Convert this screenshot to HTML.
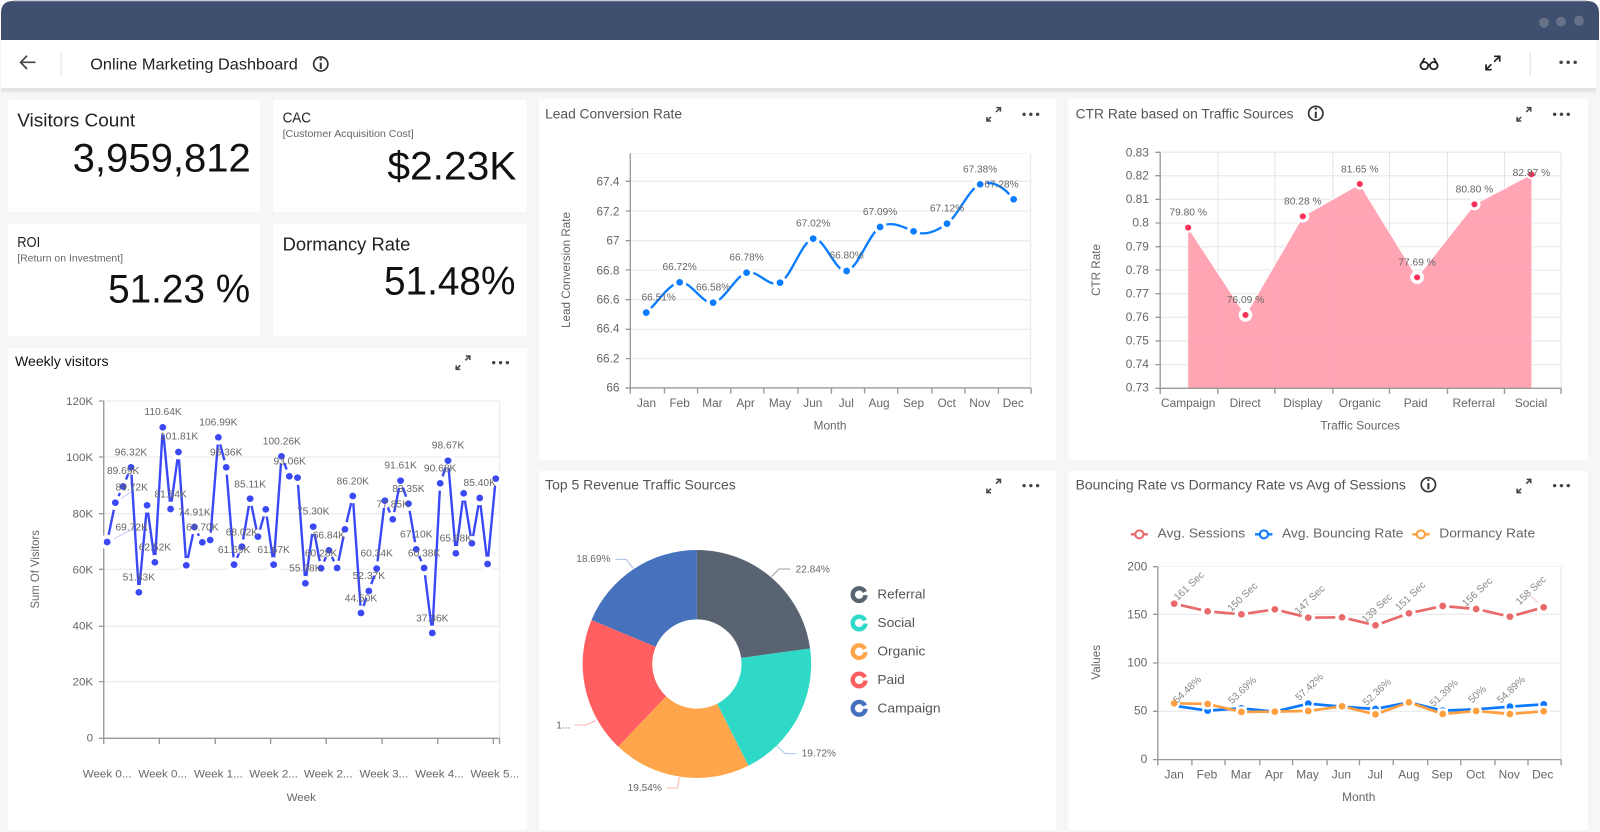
<!DOCTYPE html>
<html><head><meta charset="utf-8"><title>Online Marketing Dashboard</title>
<style>
html,body{margin:0;padding:0;width:1600px;height:832px;overflow:hidden;background:#fff}
svg{display:block;filter:blur(.35px)}
text{font-family:"Liberation Sans",sans-serif;fill:#666}
.l{font-size:30px}
.a{font-size:35px}
.t{font-size:41px;fill:#555}
.m{text-anchor:middle}
.e{text-anchor:end}
.big{font-size:120px;fill:#111;text-anchor:end}
.grid{stroke:#ececec;stroke-width:4;fill:none}
.ax{stroke:#999;stroke-width:4;fill:none}
</style></head><body>
<svg xmlns="http://www.w3.org/2000/svg" width="1600" height="832" viewBox="0 0 1600 832">
<defs>
<g id="ex" fill="none" stroke="#444" stroke-width="4.5"><path d="M14 31L3 42M2 31V43H14M29 16L41 4M30 3H42V15"/></g>
<g id="dots" fill="#444"><circle cx="0" cy="0" r="5"/><circle cx="20" cy="0" r="5"/><circle cx="40" cy="0" r="5"/></g>
<polygon id="wd" points="0,0 32,-15 35,3" fill="#fff"/>
</defs>
<rect width="1600" height="832" fill="#f6f6f6"/>
<path d="M0 0H1600V40H0Z" fill="#fff"/>
<path d="M1 40V13Q1 1 13 1H1587Q1599 1 1599 13V40Z" fill="#3f4f70"/>
<path d="M13 1H1587" stroke="#8b94a8" stroke-width="1"/>
<circle cx="1544" cy="22.7" r="5" fill="#667086"/><circle cx="1561" cy="21.7" r="5" fill="#667086"/><circle cx="1579" cy="20.7" r="5" fill="#667086"/>
<rect x="1" y="40" width="1595" height="48" fill="#fff"/>
<rect x="1" y="88" width="1595" height="3" fill="#e4e4e4"/>
<rect x="1" y="91" width="1595" height="2" fill="#eeeeee"/>

<!-- crop 1 frame -->
<g transform="scale(.338 .3333)">
<path d="M62 187H105M80 167L61 187L80 207" fill="none" stroke="#444" stroke-width="5"/>
<path d="M181 157V227" stroke="#ddd" stroke-width="3"/>
<text x="267" y="209" style="font-size:47px;fill:#222" textLength="614" lengthAdjust="spacingAndGlyphs">Online Marketing Dashboard</text>
<circle cx="949" cy="192" r="21" fill="none" stroke="#333" stroke-width="5"/><path d="M949 188V207" stroke="#333" stroke-width="6"/><circle cx="949" cy="178" r="3.5" fill="#333"/>
<rect x="24" y="300" width="746" height="335" fill="#fff"/>
<rect x="808" y="300" width="750" height="335" fill="#fff"/>
<rect x="24" y="672" width="746" height="335" fill="#fff"/>
<rect x="808" y="672" width="750" height="335" fill="#fff"/>
<text x="51" y="380" style="font-size:55px;fill:#222" textLength="349" lengthAdjust="spacingAndGlyphs">Visitors Count</text>
<text x="742" y="515" class="big" textLength="527" lengthAdjust="spacingAndGlyphs">3,959,812</text>
<text x="836" y="368" style="font-size:44px;fill:#222" textLength="84" lengthAdjust="spacingAndGlyphs">CAC</text>
<text x="836" y="411" style="font-size:30px;fill:#666" textLength="388" lengthAdjust="spacingAndGlyphs">[Customer Acquisition Cost]</text>
<text x="1528" y="539" class="big" textLength="382" lengthAdjust="spacingAndGlyphs">$2.23K</text>
<text x="51" y="741" style="font-size:44px;fill:#222" textLength="68" lengthAdjust="spacingAndGlyphs">ROI</text>
<text x="51" y="784" style="font-size:30px;fill:#666" textLength="313" lengthAdjust="spacingAndGlyphs">[Return on Investment]</text>
<text x="740" y="908" class="big" textLength="420" lengthAdjust="spacingAndGlyphs">51.23 %</text>
<text x="836" y="751" style="font-size:55px;fill:#222" textLength="378" lengthAdjust="spacingAndGlyphs">Dormancy Rate</text>
<text x="1525" y="883" class="big" textLength="389" lengthAdjust="spacingAndGlyphs">51.48%</text>
</g>

<!-- toolbar right -->
<g transform="translate(1050 0) scale(.3508 .3333)">
<circle cx="1067" cy="197" r="11" fill="none" stroke="#222" stroke-width="5"/><circle cx="1094" cy="197" r="11" fill="none" stroke="#222" stroke-width="5"/><path d="M1056 195L1068 174M1105 195L1094 174M1078 194H1083" fill="none" stroke="#222" stroke-width="5"/>
<path d="M1258 193L1244 208M1243 193V209H1259M1266 185L1281 170M1266 169H1282V185" fill="none" stroke="#222" stroke-width="5"/>
<path d="M1369 157V227" stroke="#ddd" stroke-width="3"/>
<use href="#dots" transform="translate(1457 187)"/>
</g>

<!-- Weekly -->
<g transform="translate(0 345) scale(.3412 .3333)">
<rect x="22" y="10" width="1523" height="1445" fill="#fff"/>
<text x="44" y="63" style="font-size:42px;fill:#111" textLength="274" lengthAdjust="spacingAndGlyphs">Weekly visitors</text>
<use href="#ex" x="1335" y="30"/><use href="#dots" transform="translate(1447 53)"/>
<path class="grid" d="M304 168H1464M304 336H1464M304 506H1464M304 673H1464M304 844H1464M304 1010H1464M1464 168V1180" />
<path class="ax" d="M304 168V1180H1464M290 168H304M290 336H304M290 506H304M290 673H304M290 844H304M290 1010H304M290 1180H304M304 1180V1197M467 1180V1197M631 1180V1197M793 1180V1197M956 1180V1197M1120 1180V1197M1283 1180V1197M1446 1180V1197M1464 1180V1197"/>
<g class="a" style="font-size:34px" text-anchor="end">
<text x="273" y="180" class="e" style="font-size:34px">120K</text><text x="273" y="348" class="e" style="font-size:34px">100K</text><text x="273" y="517" class="e" style="font-size:34px">80K</text><text x="273" y="685" class="e" style="font-size:34px">60K</text><text x="273" y="854" class="e" style="font-size:34px">40K</text><text x="273" y="1021" class="e" style="font-size:34px">20K</text><text x="273" y="1190" class="e" style="font-size:34px">0</text>
</g>
<g>
<text x="314" y="1298" class="m" style="font-size:34px">Week 0...</text><text x="477" y="1298" class="m" style="font-size:34px">Week 0...</text><text x="640" y="1298" class="m" style="font-size:34px">Week 1...</text><text x="802" y="1298" class="m" style="font-size:34px">Week 2...</text><text x="962" y="1298" class="m" style="font-size:34px">Week 2...</text><text x="1125" y="1298" class="m" style="font-size:34px">Week 3...</text><text x="1288" y="1298" class="m" style="font-size:34px">Week 4...</text><text x="1450" y="1298" class="m" style="font-size:34px">Week 5...</text>
<text x="883" y="1368" class="m" style="font-size:34px">Week</text>
<text transform="translate(114 673) rotate(-90)" class="m" style="font-size:34px">Sum Of Visitors</text>
</g>
<path d="M314 591L385 555M338 473L385 440" stroke="#a9b0fb" stroke-width="2" fill="none"/>
<polyline fill="none" stroke="#3a48f5" stroke-width="7" stroke-linejoin="round" points="314,591 338,473 361,424 384,367 407,742 431,481 454,652 477,247 500,492 523,321 546,661 570,546 593,592 616,585 640,277 663,367 686,659 709,605 733,461 756,575 779,493 802,659 825,334 848,394 872,398 895,715 918,545 941,670 964,616 988,669 1011,553 1034,453 1058,804 1081,738 1104,671 1128,467 1151,523 1174,407 1197,476 1220,613 1243,669 1267,864 1290,415 1313,347 1336,625 1359,445 1383,595 1406,459 1429,657 1453,401"/>
<g fill="#fff">
<circle cx="314" cy="591" r="22"/><circle cx="338" cy="473" r="22"/><circle cx="361" cy="424" r="22"/><circle cx="384" cy="367" r="22"/><circle cx="407" cy="742" r="22"/><circle cx="431" cy="481" r="22"/><circle cx="454" cy="652" r="22"/><circle cx="477" cy="247" r="22"/><circle cx="500" cy="492" r="22"/><circle cx="523" cy="321" r="22"/><circle cx="546" cy="661" r="22"/><circle cx="570" cy="546" r="22"/><circle cx="593" cy="592" r="22"/><circle cx="616" cy="585" r="22"/><circle cx="640" cy="277" r="22"/><circle cx="663" cy="367" r="22"/><circle cx="686" cy="659" r="22"/><circle cx="709" cy="605" r="22"/><circle cx="733" cy="461" r="22"/><circle cx="756" cy="575" r="22"/><circle cx="779" cy="493" r="22"/><circle cx="802" cy="659" r="22"/><circle cx="825" cy="334" r="22"/><circle cx="848" cy="394" r="22"/><circle cx="872" cy="398" r="22"/><circle cx="895" cy="715" r="22"/><circle cx="918" cy="545" r="22"/><circle cx="941" cy="670" r="22"/><circle cx="964" cy="616" r="22"/><circle cx="988" cy="669" r="22"/><circle cx="1011" cy="553" r="22"/><circle cx="1034" cy="453" r="22"/><circle cx="1058" cy="804" r="22"/><circle cx="1081" cy="738" r="22"/><circle cx="1104" cy="671" r="22"/><circle cx="1128" cy="467" r="22"/><circle cx="1151" cy="523" r="22"/><circle cx="1174" cy="407" r="22"/><circle cx="1197" cy="476" r="22"/><circle cx="1220" cy="613" r="22"/><circle cx="1243" cy="669" r="22"/><circle cx="1267" cy="864" r="22"/><circle cx="1290" cy="415" r="22"/><circle cx="1313" cy="347" r="22"/><circle cx="1336" cy="625" r="22"/><circle cx="1359" cy="445" r="22"/><circle cx="1383" cy="595" r="22"/><circle cx="1406" cy="459" r="22"/><circle cx="1429" cy="657" r="22"/><circle cx="1453" cy="401" r="22"/>
</g>
<g fill="#3a48f5">
<circle cx="314" cy="591" r="10"/><circle cx="338" cy="473" r="10"/><circle cx="361" cy="424" r="10"/><circle cx="384" cy="367" r="10"/><circle cx="407" cy="742" r="10"/><circle cx="431" cy="481" r="10"/><circle cx="454" cy="652" r="10"/><circle cx="477" cy="247" r="10"/><circle cx="500" cy="492" r="10"/><circle cx="523" cy="321" r="10"/><circle cx="546" cy="661" r="10"/><circle cx="570" cy="546" r="10"/><circle cx="593" cy="592" r="10"/><circle cx="616" cy="585" r="10"/><circle cx="640" cy="277" r="10"/><circle cx="663" cy="367" r="10"/><circle cx="686" cy="659" r="10"/><circle cx="709" cy="605" r="10"/><circle cx="733" cy="461" r="10"/><circle cx="756" cy="575" r="10"/><circle cx="779" cy="493" r="10"/><circle cx="802" cy="659" r="10"/><circle cx="825" cy="334" r="10"/><circle cx="848" cy="394" r="10"/><circle cx="872" cy="398" r="10"/><circle cx="895" cy="715" r="10"/><circle cx="918" cy="545" r="10"/><circle cx="941" cy="670" r="10"/><circle cx="964" cy="616" r="10"/><circle cx="988" cy="669" r="10"/><circle cx="1011" cy="553" r="10"/><circle cx="1034" cy="453" r="10"/><circle cx="1058" cy="804" r="10"/><circle cx="1081" cy="738" r="10"/><circle cx="1104" cy="671" r="10"/><circle cx="1128" cy="467" r="10"/><circle cx="1151" cy="523" r="10"/><circle cx="1174" cy="407" r="10"/><circle cx="1197" cy="476" r="10"/><circle cx="1220" cy="613" r="10"/><circle cx="1243" cy="669" r="10"/><circle cx="1267" cy="864" r="10"/><circle cx="1290" cy="415" r="10"/><circle cx="1313" cy="347" r="10"/><circle cx="1336" cy="625" r="10"/><circle cx="1359" cy="445" r="10"/><circle cx="1383" cy="595" r="10"/><circle cx="1406" cy="459" r="10"/><circle cx="1429" cy="657" r="10"/><circle cx="1453" cy="401" r="10"/>
</g>
<g class="m">
<text class="l m" x="478" y="210">110.64K</text><text class="l m" x="525" y="284">101.81K</text><text class="l m" x="640" y="242">106.99K</text><text class="l m" x="663" y="331">96.36K</text><text class="l m" x="384" y="331">96.32K</text><text class="l m" x="361" y="387">89.69K</text><text class="l m" x="386" y="437">89.72K</text><text class="l m" x="386" y="556">69.72K</text><text class="l m" x="454" y="616">62.52K</text><text class="l m" x="407" y="707">51.83K</text><text class="l m" x="500" y="457">81.54K</text><text class="l m" x="570" y="511">74.91K</text><text class="l m" x="593" y="556">69.70K</text><text class="l m" x="709" y="571">68.02K</text><text class="l m" x="686" y="624">61.69K</text><text class="l m" x="733" y="427">85.11K</text><text class="l m" x="802" y="624">61.67K</text><text class="l m" x="826" y="299">100.26K</text><text class="l m" x="849" y="359">93.06K</text><text class="l m" x="918" y="508">75.30K</text><text class="l m" x="964" y="581">66.84K</text><text class="l m" x="941" y="635">60.28K</text><text class="l m" x="895" y="679">55.08K</text><text class="l m" x="1034" y="418">86.20K</text><text class="l m" x="1104" y="635">60.34K</text><text class="l m" x="1081" y="702">52.37K</text><text class="l m" x="1058" y="770">44.50K</text><text class="l m" x="1174" y="371">91.61K</text><text class="l m" x="1197" y="441">83.35K</text><text class="l m" x="1151" y="487">77.85K</text><text class="l m" x="1220" y="577">67.10K</text><text class="l m" x="1243" y="635">60.38K</text><text class="l m" x="1267" y="830">37.36K</text><text class="l m" x="1313" y="311">98.67K</text><text class="l m" x="1290" y="379">90.68K</text><text class="l m" x="1336" y="590">65.68K</text><text class="l m" x="1406" y="423">85.40K</text>
</g>
</g>

<!-- Lead conversion -->
<g transform="translate(535 95) scale(.338 .3333)">
<rect x="12" y="13" width="1530" height="1082" fill="#fff"/>
<text x="30" y="70" class="t" textLength="405" lengthAdjust="spacingAndGlyphs">Lead Conversion Rate</text>
<use href="#ex" x="1335" y="35"/><use href="#dots" transform="translate(1447 58)"/>
<path class="grid" d="M282 259H1466M282 348H1466M282 437H1466M282 525H1466M282 614H1466M282 703H1466M282 791H1466M1466 175V879"/>
<path d="M282 175H1466" stroke="#f2f2f2" stroke-width="3"/>
<path class="ax" d="M282 175V879H1468M268 259H282M268 348H282M268 437H282M268 525H282M268 614H282M268 703H282M268 791H282M268 879H282M282 879V896M383 879V896M481 879V896M579 879V896M677 879V896M778 879V896M877 879V896M975 879V896M1073 879V896M1174 879V896M1272 879V896M1371 879V896M1468 879V896"/>
<text x="250" y="272" class="a e">67.4</text><text x="250" y="361" class="a e">67.2</text><text x="250" y="449" class="a e">67</text><text x="250" y="538" class="a e">66.8</text><text x="250" y="625" class="a e">66.6</text><text x="250" y="713" class="a e">66.4</text><text x="250" y="802" class="a e">66.2</text><text x="250" y="890" class="a e">66</text>
<text x="330" y="936" class="a m">Jan</text><text x="428" y="936" class="a m">Feb</text><text x="525" y="936" class="a m">Mar</text><text x="623" y="936" class="a m">Apr</text><text x="725" y="936" class="a m">May</text><text x="822" y="936" class="a m">Jun</text><text x="921" y="936" class="a m">Jul</text><text x="1018" y="936" class="a m">Aug</text><text x="1120" y="936" class="a m">Sep</text><text x="1218" y="936" class="a m">Oct</text><text x="1316" y="936" class="a m">Nov</text><text x="1415" y="936" class="a m">Dec</text>
<text x="873" y="1004" class="a m">Month</text>
<text transform="translate(104 525) rotate(-90)" class="a m">Lead Conversion Rate</text>
<path fill="none" stroke="#0a7cff" stroke-width="7" d="M329 653C362 625 395 567 428 562C461 557 494 628 527 623C560 618 593 543 626 533C659 523 692 580 725 563C758 546 790 437 823 431C856 425 889 534 922 528C955 522 988 416 1021 396C1054 376 1087 395 1120 409C1153 424 1186 410 1219 386C1252 362 1284 280 1317 268C1350 256 1383 270 1416 313"/>
<g fill="#fff"><circle cx="329" cy="653" r="20"/><circle cx="428" cy="562" r="20"/><circle cx="527" cy="623" r="20"/><circle cx="626" cy="533" r="20"/><circle cx="725" cy="563" r="20"/><circle cx="823" cy="431" r="20"/><circle cx="922" cy="528" r="20"/><circle cx="1021" cy="396" r="20"/><circle cx="1120" cy="409" r="20"/><circle cx="1219" cy="386" r="20"/><circle cx="1317" cy="268" r="20"/><circle cx="1416" cy="313" r="20"/></g>
<g fill="#0a7cff"><circle cx="329" cy="653" r="10"/><circle cx="428" cy="562" r="10"/><circle cx="527" cy="623" r="10"/><circle cx="626" cy="533" r="10"/><circle cx="725" cy="563" r="10"/><circle cx="823" cy="431" r="10"/><circle cx="922" cy="528" r="10"/><circle cx="1021" cy="396" r="10"/><circle cx="1120" cy="409" r="10"/><circle cx="1219" cy="386" r="10"/><circle cx="1317" cy="268" r="10"/><circle cx="1416" cy="313" r="10"/></g>
<text class="l m" x="366" y="617">66.51%</text><text class="l m" x="428" y="525">66.72%</text><text class="l m" x="527" y="587">66.58%</text><text class="l m" x="626" y="497">66.78%</text><text class="l m" x="823" y="394">67.02%</text><text class="l m" x="922" y="491">66.80%</text><text class="l m" x="1021" y="360">67.09%</text><text class="l m" x="1219" y="350">67.12%</text><text class="l m" x="1317" y="232">67.38%</text><text class="l m" x="1380" y="277">67.28%</text>
</g>

<!-- CTR -->
<g transform="translate(1065 95) scale(.3412 .3333)">
<rect x="10" y="13" width="1522" height="1082" fill="#fff"/>
<text x="31" y="70" class="t" textLength="639" lengthAdjust="spacingAndGlyphs">CTR Rate based on Traffic Sources</text>
<circle cx="735" cy="55" r="21" fill="none" stroke="#333" stroke-width="5"/><path d="M735 50V69" stroke="#333" stroke-width="6"/><circle cx="735" cy="41" r="3.5" fill="#333"/>
<use href="#ex" x="1323" y="35"/><use href="#dots" transform="translate(1435 58)"/>
<path class="grid" d="M279 172H1454M279 242H1454M279 313H1454M279 384H1454M279 455H1454M279 525H1454M279 596H1454M279 667H1454M279 738H1454M279 809H1454"/>
<path stroke="#e4e4e4" stroke-width="3" fill="none" d="M448 172V880M615 172V880M785 172V880M951 172V880M1121 172V880M1288 172V880M1454 172V880"/>
<path d="M361 880V398L529 660L697 364L864 267L1032 547L1200 328L1367 238V880Z" fill="#ffa0b0" fill-opacity=".95"/>
<path d="M361 398L529 660L697 364L864 267L1032 547L1200 328L1367 238" fill="none" stroke="#fff" stroke-width="3"/>
<path class="ax" d="M279 172V880H1454M265 172H279M265 242H279M265 313H279M265 384H279M265 455H279M265 525H279M265 596H279M265 667H279M265 738H279M265 809H279M265 880H279M279 880V897M448 880V897M615 880V897M785 880V897M951 880V897M1121 880V897M1288 880V897M1454 880V897"/>
<g fill="#fff"><circle cx="361" cy="398" r="15"/><circle cx="529" cy="660" r="20"/><circle cx="697" cy="364" r="19"/><circle cx="864" cy="267" r="17"/><circle cx="1032" cy="547" r="20"/><circle cx="1200" cy="328" r="18"/><circle cx="1367" cy="238" r="15"/></g>
<g fill="#f8325a"><circle cx="361" cy="398" r="9"/><circle cx="529" cy="660" r="9"/><circle cx="697" cy="364" r="9"/><circle cx="864" cy="267" r="9"/><circle cx="1032" cy="547" r="9"/><circle cx="1200" cy="328" r="9"/><circle cx="1367" cy="238" r="9"/></g>
<text x="246" y="184" class="a e">0.83</text><text x="246" y="253" class="a e">0.82</text><text x="246" y="324" class="a e">0.81</text><text x="246" y="395" class="a e">0.8</text><text x="246" y="466" class="a e">0.79</text><text x="246" y="537" class="a e">0.78</text><text x="246" y="607" class="a e">0.77</text><text x="246" y="678" class="a e">0.76</text><text x="246" y="749" class="a e">0.75</text><text x="246" y="819" class="a e">0.74</text><text x="246" y="890" class="a e">0.73</text>
<text x="361" y="936" class="a m">Campaign</text><text x="528" y="936" class="a m">Direct</text><text x="697" y="936" class="a m">Display</text><text x="864" y="936" class="a m">Organic</text><text x="1028" y="936" class="a m">Paid</text><text x="1198" y="936" class="a m">Referral</text><text x="1366" y="936" class="a m">Social</text>
<text x="865" y="1004" class="a m">Traffic Sources</text>
<text transform="translate(103 525) rotate(-90)" class="a m">CTR Rate</text>
<text class="l m" x="361" y="362">79.80 %</text><text class="l m" x="529" y="624">76.09 %</text><text class="l m" x="697" y="329">80.28 %</text><text class="l m" x="864" y="232">81.65 %</text><text class="l m" x="1032" y="511">77.69 %</text><text class="l m" x="1200" y="293">80.80 %</text><text class="l m" x="1367" y="243">82.87 %</text>
</g>

<!-- Pie -->
<g transform="translate(535 465) scale(.338 .3333)">
<rect x="12" y="18" width="1530" height="1077" fill="#fff"/>
<text x="30" y="74" class="t" textLength="564" lengthAdjust="spacingAndGlyphs">Top 5 Revenue Traffic Sources</text>
<use href="#ex" x="1335" y="40"/><use href="#dots" transform="translate(1447 62)"/>
<path d="M479 597V255A338 342 0 0 1 813.9 550.7Z" fill="#5a6372"/>
<path d="M479 597L813.9 550.7A338 342 0 0 1 631.4 902.3Z" fill="#2fd9c7"/>
<path d="M479 597L631.4 902.3A338 342 0 0 1 246.1 844.9Z" fill="#ffa64d"/>
<path d="M479 597L246.1 844.9A338 342 0 0 1 167.2 465Z" fill="#ff5f60"/>
<path d="M479 597L167.2 465A338 342 0 0 1 479 255Z" fill="#4672bd"/>
<ellipse cx="479" cy="597" rx="132" ry="134" fill="#fff"/>
<path d="M700 335L722 312H755" fill="none" stroke="#9aa0aa" stroke-width="3"/>
<path d="M715 842L740 866H773" fill="none" stroke="#a8c8f0" stroke-width="3"/>
<path d="M427 938L422 969H390" fill="none" stroke="#ffb8a8" stroke-width="3"/>
<path d="M180 767L150 780H117" fill="none" stroke="#ffb0b0" stroke-width="3"/>
<path d="M290 310L270 283H238" fill="none" stroke="#a9bde4" stroke-width="3"/>
<text class="l" x="771" y="322">22.84%</text><text class="l" x="789" y="875">19.72%</text><text class="l" x="274" y="978">19.54%</text><text class="l" x="63" y="790">1...</text><text class="l" x="122" y="291">18.69%</text>
<g fill="none" stroke-width="13">
<circle cx="959" cy="389" r="19" stroke="#5a6372"/><circle cx="959" cy="474" r="19" stroke="#2fd9c7"/><circle cx="959" cy="560" r="19" stroke="#ffa64d"/><circle cx="959" cy="645" r="19" stroke="#ff5f60"/><circle cx="959" cy="730" r="19" stroke="#4672bd"/>
</g>
<use href="#wd" x="959" y="389"/><use href="#wd" x="959" y="474"/><use href="#wd" x="959" y="560"/><use href="#wd" x="959" y="645"/><use href="#wd" x="959" y="730"/>
<text x="1013" y="401" style="font-size:40px;fill:#555" textLength="142" lengthAdjust="spacingAndGlyphs">Referral</text>
<text x="1013" y="486" style="font-size:40px;fill:#555" textLength="111" lengthAdjust="spacingAndGlyphs">Social</text>
<text x="1013" y="572" style="font-size:40px;fill:#555" textLength="142" lengthAdjust="spacingAndGlyphs">Organic</text>
<text x="1013" y="657" style="font-size:40px;fill:#555" textLength="81" lengthAdjust="spacingAndGlyphs">Paid</text>
<text x="1013" y="743" style="font-size:40px;fill:#555" textLength="187" lengthAdjust="spacingAndGlyphs">Campaign</text>
</g>

<!-- Bouncing -->
<g transform="translate(1065 465) scale(.3412 .3333)">
<rect x="10" y="18" width="1522" height="1077" fill="#fff"/>
<text x="31" y="74" class="t" textLength="968" lengthAdjust="spacingAndGlyphs">Bouncing Rate vs Dormancy Rate vs Avg of Sessions</text>
<circle cx="1065" cy="59" r="21" fill="none" stroke="#333" stroke-width="5"/><path d="M1065 54V73" stroke="#333" stroke-width="6"/><circle cx="1065" cy="45" r="3.5" fill="#333"/>
<use href="#ex" x="1323" y="40"/><use href="#dots" transform="translate(1435 62)"/>
<path d="M193 208H243" stroke="#e86a6a" stroke-width="7"/><circle cx="218" cy="208" r="12" fill="#fff" stroke="#e86a6a" stroke-width="6"/>
<text x="271" y="218" style="font-size:40px" fill="#666" textLength="257" lengthAdjust="spacingAndGlyphs">Avg. Sessions</text>
<path d="M557 208H608" stroke="#0a78ff" stroke-width="7"/><circle cx="583" cy="208" r="12" fill="#fff" stroke="#0a78ff" stroke-width="6"/>
<text x="636" y="218" style="font-size:40px" textLength="356" lengthAdjust="spacingAndGlyphs">Avg. Bouncing Rate</text>
<path d="M1018 208H1069" stroke="#ff9f40" stroke-width="7"/><circle cx="1043" cy="208" r="12" fill="#fff" stroke="#ff9f40" stroke-width="6"/>
<text x="1097" y="218" style="font-size:40px" textLength="281" lengthAdjust="spacingAndGlyphs">Dormancy Rate</text>
<path class="grid" d="M272 448H1454M272 594H1454M272 739H1454M1454 305V884"/>
<path d="M272 305H1454" stroke="#f2f2f2" stroke-width="3"/>
<path class="ax" d="M272 305V884H1454M258 305H272M258 448H272M258 594H272M258 739H272M258 884H272M272 884V901M372 884V901M469 884V901M571 884V901M667 884V901M768 884V901M863 884V901M962 884V901M1063 884V901M1160 884V901M1260 884V901M1357 884V901M1454 884V901"/>
<text x="241" y="316" class="a e">200</text><text x="241" y="460" class="a e">150</text><text x="241" y="605" class="a e">100</text><text x="241" y="749" class="a e">50</text><text x="241" y="894" class="a e">0</text>
<text x="320" y="940" class="a m">Jan</text><text x="416" y="940" class="a m">Feb</text><text x="516" y="940" class="a m">Mar</text><text x="613" y="940" class="a m">Apr</text><text x="711" y="940" class="a m">May</text><text x="810" y="940" class="a m">Jun</text><text x="909" y="940" class="a m">Jul</text><text x="1008" y="940" class="a m">Aug</text><text x="1105" y="940" class="a m">Sep</text><text x="1203" y="940" class="a m">Oct</text><text x="1302" y="940" class="a m">Nov</text><text x="1400" y="940" class="a m">Dec</text>
<text x="861" y="1008" class="a m">Month</text>
<text transform="translate(103 592) rotate(-90)" class="a m">Values</text>
<path d="M1365 393L1395 420" stroke="#f3b0b0" stroke-width="2"/>
<polyline fill="none" stroke="#e86a6a" stroke-width="8" points="320,416 418,439 517,448 615,433 713,458 812,457 910,481 1008,445 1107,423 1205,432 1304,455 1403,427"/>
<g fill="#fff"><circle cx="320" cy="416" r="20"/><circle cx="418" cy="439" r="20"/><circle cx="517" cy="448" r="20"/><circle cx="615" cy="433" r="20"/><circle cx="713" cy="458" r="20"/><circle cx="812" cy="457" r="20"/><circle cx="910" cy="481" r="20"/><circle cx="1008" cy="445" r="20"/><circle cx="1107" cy="423" r="20"/><circle cx="1205" cy="432" r="20"/><circle cx="1304" cy="455" r="20"/><circle cx="1403" cy="427" r="20"/></g>
<g fill="#e86a6a"><circle cx="320" cy="416" r="10"/><circle cx="418" cy="439" r="10"/><circle cx="517" cy="448" r="10"/><circle cx="615" cy="433" r="10"/><circle cx="713" cy="458" r="10"/><circle cx="812" cy="457" r="10"/><circle cx="910" cy="481" r="10"/><circle cx="1008" cy="445" r="10"/><circle cx="1107" cy="423" r="10"/><circle cx="1205" cy="432" r="10"/><circle cx="1304" cy="455" r="10"/><circle cx="1403" cy="427" r="10"/></g>
<polyline fill="none" stroke="#0a78ff" stroke-width="8" points="320,722 418,737 517,730 615,740 713,716 812,725 910,732 1008,712 1107,737 1205,733 1304,725 1403,718"/>
<g fill="#fff"><circle cx="418" cy="737" r="16"/><circle cx="517" cy="730" r="16"/><circle cx="713" cy="716" r="16"/><circle cx="910" cy="732" r="16"/><circle cx="1107" cy="737" r="16"/><circle cx="1304" cy="725" r="16"/><circle cx="1403" cy="718" r="16"/></g>
<g fill="#0a78ff"><circle cx="418" cy="737" r="10"/><circle cx="517" cy="730" r="10"/><circle cx="713" cy="716" r="10"/><circle cx="910" cy="732" r="10"/><circle cx="1107" cy="737" r="10"/><circle cx="1304" cy="725" r="10"/><circle cx="1403" cy="718" r="10"/></g>
<polyline fill="none" stroke="#ff9f40" stroke-width="8" points="320,715 418,717 517,741 615,740 713,738 812,724 910,748 1008,712 1107,747 1205,738 1304,747 1403,739"/>
<g fill="#fff"><circle cx="320" cy="715" r="17"/><circle cx="418" cy="717" r="17"/><circle cx="517" cy="741" r="17"/><circle cx="615" cy="740" r="17"/><circle cx="713" cy="738" r="17"/><circle cx="812" cy="724" r="17"/><circle cx="910" cy="748" r="17"/><circle cx="1008" cy="712" r="17"/><circle cx="1107" cy="747" r="17"/><circle cx="1205" cy="738" r="17"/><circle cx="1304" cy="747" r="17"/><circle cx="1403" cy="739" r="17"/></g>
<g fill="#ff9f40"><circle cx="320" cy="715" r="10"/><circle cx="418" cy="717" r="10"/><circle cx="517" cy="741" r="10"/><circle cx="615" cy="740" r="10"/><circle cx="713" cy="738" r="10"/><circle cx="812" cy="724" r="10"/><circle cx="910" cy="748" r="10"/><circle cx="1008" cy="712" r="10"/><circle cx="1107" cy="747" r="10"/><circle cx="1205" cy="738" r="10"/><circle cx="1304" cy="747" r="10"/><circle cx="1403" cy="739" r="10"/></g>
<g>
<text class="l m" style="fill:#888" transform="translate(370 370) rotate(-44)">161 Sec</text><text class="l m" style="fill:#888" transform="translate(527 403) rotate(-44)">150 Sec</text><text class="l m" style="fill:#888" transform="translate(724 411) rotate(-44)">147 Sec</text><text class="l m" style="fill:#888" transform="translate(921 436) rotate(-44)">139 Sec</text><text class="l m" style="fill:#888" transform="translate(1019 400) rotate(-44)">151 Sec</text><text class="l m" style="fill:#888" transform="translate(1215 388) rotate(-44)">156 Sec</text><text class="l m" style="fill:#888" transform="translate(1372 383) rotate(-44)">158 Sec</text>
<text class="l m" style="fill:#888" transform="translate(365 681) rotate(-44)">54.48%</text><text class="l m" style="fill:#888" transform="translate(526 683) rotate(-44)">53.69%</text><text class="l m" style="fill:#888" transform="translate(723 673) rotate(-44)">57.42%</text><text class="l m" style="fill:#888" transform="translate(921 688) rotate(-44)">52.36%</text><text class="l m" style="fill:#888" transform="translate(1117 691) rotate(-44)">51.39%</text><text class="l m" style="fill:#888" transform="translate(1215 695) rotate(-44)">50%</text><text class="l m" style="fill:#888" transform="translate(1314 681) rotate(-44)">54.89%</text>
</g>
</g>
</svg>
</body></html>
